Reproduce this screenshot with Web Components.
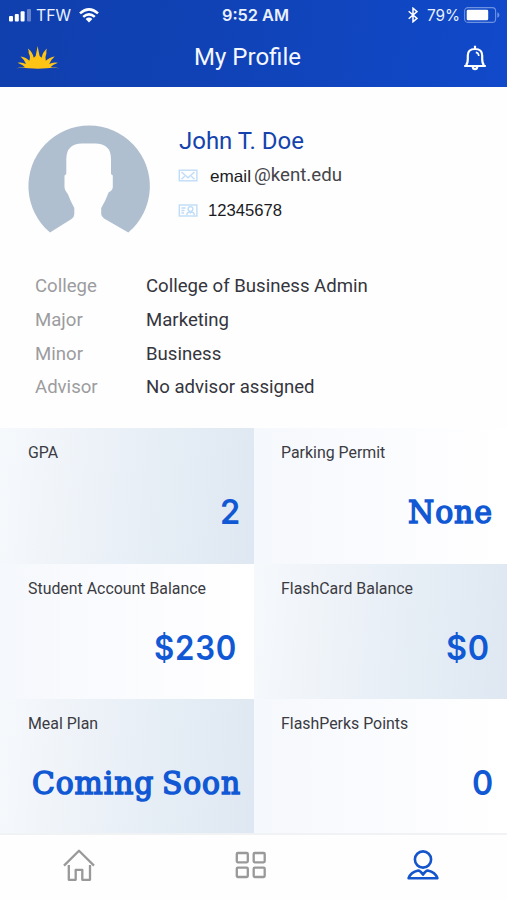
<!DOCTYPE html>
<html lang="en"><head><meta charset="utf-8"><title>My Profile</title>
<style>html,body{margin:0;background:#fff}</style></head><body>
<profile-app></profile-app>
<script>
const define=(name,html,after)=>customElements.define(name,class extends HTMLElement{
  connectedCallback(){
    if(this.shadowRoot)return;
    this.attachShadow({mode:'open'}).innerHTML=html;
    if(after)after.call(this);
  }
});

/* One line of text, scaled horizontally to the width given in "w". */
define('fit-text',`<style>
:host{display:block;white-space:nowrap}
span{display:inline-block;transform-origin:0 50%}
</style><span><slot></slot></span>`,function(){
  const s=this.shadowRoot.querySelector('span'),w=+this.getAttribute('w');
  const n=s.getBoundingClientRect().width;
  this.style.width=w+'px';
  if(n)s.style.transform='scaleX('+w/n+')';
});

define('status-bar',`<style>
:host{display:flex;height:30px;align-items:center;font:400 16px/30px Inter,sans-serif;color:#e9f1ff;box-sizing:border-box;padding-left:9px}
svg{display:block;flex:none}
.t{margin-left:5px}.wifi{margin-left:8px}
.c{margin-left:123px;font-weight:600}.b{margin-left:119px}.p{margin-left:9px}.bat{margin-left:4px}
</style>
<svg width="22" height="14" viewBox="0 0 22 14" fill="#fff"><rect y="8" width="4" height="5.5" rx="1"/><rect x="5.8" y="6" width="4" height="7.5" rx="1"/><rect x="11.6" y="3.2" width="4" height="10.3" rx="1"/><rect x="18" y="1" width="4" height="12.5" rx="1" opacity=".35"/></svg>
<fit-text class="t" w="35">TFW</fit-text>
<svg class="wifi" width="20" height="15" viewBox="0 0 20 15" fill="none" stroke="#fff" stroke-width="2.5"><path d="M1 5.4Q10-2.6 19 5.4M4.2 8.9Q10 3.8 15.8 8.9"/><path d="M6.6 10.9Q10 8.1 13.4 10.9L10 14.4Z" fill="#fff" stroke="none"/></svg>
<fit-text class="c" w="67">9:52 AM</fit-text>
<svg class="b" width="10" height="16" viewBox="0 0 10 16" fill="none" stroke="#fff" stroke-width="1.5"><path d="M.7 4.2 9 11.4 5 14.8V1.2L9 4.6.7 11.8"/></svg>
<fit-text class="p" w="33">79%</fit-text>
<svg class="bat" width="36" height="16" viewBox="0 0 36 16"><rect x=".6" y=".6" width="31" height="14.8" rx="3.4" fill="none" stroke="#6d92e0" stroke-width="1.1"/><rect x="2.7" y="2.7" width="21.5" height="10.6" rx="1.4" fill="#fff"/><path d="M33.3 5.3Q35.4 6 35.4 8T33.3 10.7Z" fill="#6d92e0"/></svg>`);

define('sun-logo',`<style>:host{display:block}svg{display:block}</style>
<svg width="44" height="24" viewBox="0 0 44 24" fill="#fdc416"><path d="M0 22.2Q5 21 9 21.2Q7 19 1.5 16.8Q5.5 15.6 10 18Q9 14.5 4.5 10.6Q9.5 11 13.2 14.8Q15 11 12.6 7Q13 4.5 11.8 2.4Q16.5 5.5 17.7 11.7L19.7 10 21.6 0 23.6 10 25.6 11.7Q26.6 6 31 2.4Q29.8 5.4 30.4 7.6Q28.8 11 29.8 14.8Q33.5 11 38.7 10.4Q34.5 14 33.2 18Q37 15.6 42 16.8Q36.5 18.8 34.5 21.2Q38.5 21 43.4 22.2Q36 21.5 30.5 22.3Q22 23.2 13 22.3Q7 21.5 0 22.2Z"/></svg>`);

define('title-bar',`<style>
:host{display:flex;align-items:flex-start;height:57px;padding-left:16px;box-sizing:border-box;font:400 23.5px/54px Roboto,sans-serif;color:#f4f8ff}
.title{margin-left:134px}.bell{margin:15px 0 0 162px}svg{display:block}
sun-logo{padding-top:16px}
</style><sun-logo></sun-logo><fit-text class="title" w="107">My Profile</fit-text>
<svg class="bell" width="24" height="26" viewBox="0 0 24 26" fill="none" stroke="#fff" stroke-width="2.2"><path d="M1.2 21H22.8M3 20.3Q4.8 18.5 4.8 14V10.5Q4.8 4 12 4T19.2 10.5V14Q19.2 18.5 21 20.3M12 .7V4" /><path d="M12.8 7.4Q15.6 7.8 15.8 11" stroke-width="1.6"/><path d="M9.7 21.7Q9.9 24.2 12 24.2T14.3 21.7" /></svg>`);

define('app-header',`<style>:host{display:block;height:87px;background:linear-gradient(100deg,#103fae 0%,#1042b5 40%,#1049ca 100%)}</style><slot></slot>`);

define('user-avatar',`<style>:host{display:block;width:122px;height:112px}svg{display:block}</style>
<svg width="122" height="112" viewBox="0 0 122 112"><path fill="#b0bfcf" d="M22 107.6A60.7 60.7 0 1 1 100.3 107.6L76 93.4Q73.2 91.6 73.2 89V83Q77.5 76 80.6 67.5Q84.8 65 84.8 62V50.5L83 49V34Q83 18.5 67 18.5H54Q38.5 18.5 38.3 34V49L36.5 50.5V62Q36.5 65 39.8 69Q42.5 76 46.3 83V89Q46.3 92 43.5 94Z"/></svg>`);

define('user-card',`<style>
:host{display:flex;padding:37px 0 0 28px;height:148px;box-sizing:content-box}
user-avatar{margin-top:.5px}
.info{margin-left:29px;display:flex;flex-direction:column}
.name{font:400 24px/34px Roboto,sans-serif;color:#1443ad}
.row{display:flex;align-items:center;font:400 16.5px/34px "Liberation Sans",sans-serif;color:#1b1b1f;margin-left:-1px}
.email{height:35px}.id{height:34px;font-size:16px}
.mail{margin-left:12px}.dom{margin-left:3px;font:400 18.7px/34px Roboto,sans-serif;color:#45454b;margin-top:-2px}
.num{margin-left:10px;padding-top:1px}svg{display:block}
</style><user-avatar></user-avatar>
<div class="info"><fit-text class="name" w="125"><slot name="name"></slot></fit-text>
<div class="row email"><svg width="20" height="13" viewBox="0 0 20 13" fill="none" stroke="#bfdcf8" stroke-width="1.4"><rect x="1.3" y="1.2" width="17.6" height="10.6"/><path d="M3.5 3 10 8.7 16.5 3M3.5 10.3 6.7 7.3M16.5 10.3 13.3 7.3"/></svg><fit-text class="mail" w="41">email</fit-text><fit-text class="dom" w="88">@kent.edu</fit-text></div>
<div class="row id"><svg width="20" height="13" viewBox="0 0 20 13" fill="none" stroke="#bfdcf8" stroke-width="1.4"><rect x="1.3" y="1" width="17.6" height="11"/><circle cx="12.5" cy="5" r="2.4"/><path d="M8.8 11Q9 8 11.5 8.3L12.5 9 13.5 8.3Q16 8 16.3 11M3.4 4H7.5M3.4 6.5H6.5M3.4 9H6"/></svg><fit-text class="num" w="74">12345678</fit-text></div></div>`);

define('detail-row',`<style>:host{display:grid;grid-template-columns:111px 1fr;height:33.7px;font:400 18.6px/33.7px Roboto,sans-serif;color:#35353d}.l{color:#9c9c9e}</style><div class="l"><slot name="label"></slot></div><div><slot></slot></div>`);
define('detail-list',`<style>:host{display:block;margin-left:35px;height:159px;box-sizing:border-box;margin-top:-3px;padding-top:1.2px}</style><slot></slot>`);

define('stat-tile',`<style>
:host{display:flex;flex-direction:column;box-sizing:border-box;padding-top:13px;background:linear-gradient(90deg,#f5f8fc 0%,#fafbfe 45%,#fff 100%)}
:host([tint]){background:linear-gradient(95deg,#f6f9fc 0%,#edf2f8 35%,#e5edf5 65%,#dfe8f2 100%)}
.label{font:400 15.9px/24px Roboto,sans-serif;color:#3b3b43;padding-left:var(--x,28px)}
.value{margin-top:26px;align-self:flex-end;color:#1158d4;font:600 33.5px/42px Inter,sans-serif;letter-spacing:.8px}
:host([word]) .value{font:400 32.5px/42px "DejaVu Serif",serif;-webkit-text-stroke:1.6px #1158d4;letter-spacing:1px;word-spacing:-3px}
</style><div class="label"><slot></slot></div><div class="value"></div>`,function(){
  const f=document.createElement('fit-text');
  f.setAttribute('w',this.getAttribute('w'));
  f.textContent=this.getAttribute('value');
  f.style.marginRight=this.getAttribute('end')+'px';
  this.shadowRoot.querySelector('.value').append(f);
});
define('stat-grid',`<style>:host{display:grid;grid-template-columns:254px 253px;grid-template-rows:135.5px 135.5px 134px}::slotted(:nth-child(even)){--x:27px}</style><slot></slot>`);

define('tab-bar',`<style>
:host{display:grid;grid-template-columns:157px 187px 157px;height:67px;box-sizing:border-box;border-top:2px solid #f0f2f4;background:#fefefe}
div{display:flex;justify-content:center;padding-top:14px}svg{display:block}
</style>
<div><svg width="32" height="34" viewBox="0 0 32 34" fill="none" stroke="#999" stroke-width="2.3"><path d="M1 16.6 16 1.8 31 16.6M5.8 16V30.8H12.7V20.8H19.3V30.8H27V16" stroke-linejoin="round"/></svg></div>
<div><svg width="32" height="30" viewBox="0 0 32 30" fill="none" stroke="#999" stroke-width="2.3"><rect x="1.8" y="4" width="11" height="9.3" rx="1"/><rect x="18.7" y="4" width="11" height="9.3" rx="1"/><rect x="1.8" y="18.7" width="11" height="9.3" rx="1"/><rect x="18.7" y="18.7" width="11" height="9.3" rx="1"/></svg></div>
<div><svg width="34" height="34" viewBox="0 0 34 34" fill="none" stroke="#1455cc" stroke-width="2.6" stroke-linejoin="round"><circle cx="17" cy="10.5" r="8.1"/><path d="M2.6 29.2Q4.5 23.4 12.3 21.6Q14 21.4 17 25.6Q20 21.4 21.7 21.6Q29.5 23.4 31.4 29.2Z"/></svg></div>`);

define('profile-app',`<style>:host{display:flex;flex-direction:column;width:507px;height:900px;overflow:hidden;background:#fefefe}:host>*{flex-shrink:0}</style>
<app-header><status-bar></status-bar><title-bar></title-bar></app-header>
<user-card><span slot="name">John T. Doe</span></user-card>
<detail-list>
<detail-row><span slot="label">College</span>College of Business Admin</detail-row>
<detail-row><span slot="label">Major</span>Marketing</detail-row>
<detail-row><span slot="label">Minor</span>Business</detail-row>
<detail-row><span slot="label">Advisor</span>No advisor assigned</detail-row>
</detail-list>
<stat-grid>
<stat-tile tint value="2" w="21" end="13">GPA</stat-tile>
<stat-tile word value="None" w="85" end="14">Parking Permit</stat-tile>
<stat-tile value="$230" w="83" end="17">Student Account Balance</stat-tile>
<stat-tile tint value="$0" w="44" end="17">FlashCard Balance</stat-tile>
<stat-tile tint word value="Coming Soon" w="209" end="13">Meal Plan</stat-tile>
<stat-tile value="0" w="22" end="13">FlashPerks Points</stat-tile>
</stat-grid>
<tab-bar></tab-bar>`);
</script></body></html>
